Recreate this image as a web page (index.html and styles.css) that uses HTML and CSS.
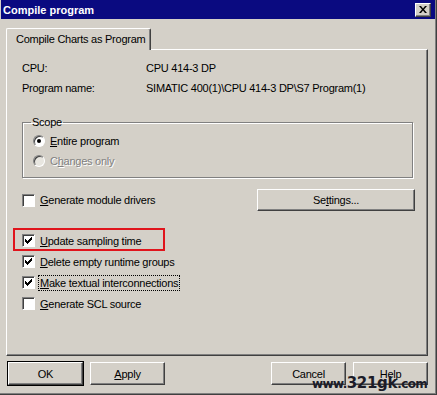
FILE: index.html
```html
<!DOCTYPE html>
<html lang="en">
<head>
    <meta charset="UTF-8">
    <title>Compile program</title>
    <link rel="stylesheet" href="styles.css">
</head>
<body>
    <div class="window">
        <div class="titlebar">
            <span class="title">Compile program</span>
            <span class="close-btn">
                <svg width="8" height="7" viewBox="0 0 8 7">
                    <path d="M0 0h2l2 2.5 2-2.5h2l-3 3.5 3 3.5h-2l-2-2.5-2 2.5h-2l3-3.5z" fill="#000"/>
                </svg>
            </span>
        </div>

        <div class="dialog-body">
            <div class="tabs">
                <div class="tab active">Compile Charts as Program</div>
            </div>

            <div class="panel">
                <div class="info-row">
                    <span class="info-label">CPU:</span>
                    <span>CPU 414-3 DP</span>
                </div>
                <div class="info-row">
                    <span class="info-label">Program name:</span>
                    <span>SIMATIC 400(1)\CPU 414-3 DP\S7 Program(1)</span>
                </div>

                <!-- Scope group -->
                <fieldset class="group">
                    <legend>Scope</legend>
                    <div class="option-row">
                        <span class="radio checked"></span>
                        <span><u>E</u>ntire program</span>
                    </div>
                    <div class="option-row disabled">
                        <span class="radio"></span>
                        <span>C<u>h</u>anges only</span>
                    </div>
                </fieldset>

                <div class="driver-row">
                    <div class="option-row">
                        <span class="checkbox"></span>
                        <span><u>G</u>enerate module drivers</span>
                    </div>
                    <button class="btn settings-btn">Se<u>t</u>tings...</button>
                </div>

                <div class="check-list">
                    <div class="option-row highlighted">
                        <span class="checkbox checked"></span>
                        <span><u>U</u>pdate sampling time</span>
                    </div>
                    <div class="option-row">
                        <span class="checkbox checked"></span>
                        <span><u>D</u>elete empty runtime groups</span>
                    </div>
                    <div class="option-row">
                        <span class="checkbox checked"></span>
                        <span class="focused"><u>M</u>ake textual interconnections</span>
                    </div>
                    <div class="option-row">
                        <span class="checkbox"></span>
                        <span><u>G</u>enerate SCL source</span>
                    </div>
                </div>
            </div>

            <div class="button-bar">
                <button class="btn default">OK</button>
                <button class="btn"><u>A</u>pply</button>
                <span class="spacer"></span>
                <button class="btn">Cancel</button>
                <button class="btn">Help</button>
            </div>
        </div>

        <div class="watermark">www.<span class="big">321gk</span>.com</div>
    </div>
</body>
</html>
```

FILE: styles.css
```css
body {
    margin: 0;
    font-family: "Liberation Sans", Arial, sans-serif;
    font-size: 11px;
    letter-spacing: -0.25px;
    color: #000;
    background-color: #d4d0c8;
}
.window {
    position: relative;
    width: 437px;
    height: 395px;
    box-sizing: border-box;
    background-color: #d4d0c8;
    border-right: 1px solid #404040;
    border-bottom: 1px solid #404040;
    box-shadow: inset -1px -1px 0 #808080;
    overflow: hidden;
}
.titlebar {
    height: 19px;
    margin: 0 1px 0 1px;
    background-color: #0a0a80;
    display: flex;
    align-items: center;
    justify-content: space-between;
    padding: 0 4px 0 2px;
}
.title {
    color: #fff;
    font-weight: bold;
    font-size: 11px;
    letter-spacing: 0;
}
.close-btn {
    width: 16px;
    height: 14px;
    box-sizing: border-box;
    background-color: #d4d0c8;
    border-top: 1px solid #fff;
    border-left: 1px solid #fff;
    border-right: 1px solid #404040;
    border-bottom: 1px solid #404040;
    box-shadow: inset -1px -1px 0 #808080;
    display: flex;
    align-items: center;
    justify-content: center;
}
.dialog-body {
    padding: 9px 8px 0 6px;
}
.tabs {
    display: flex;
    position: relative;
    z-index: 1;
}
.tab {
    height: 21px;
    line-height: 20px;
    padding: 0 5px 0 9px;
    white-space: nowrap;
    border-top: 1px solid #fff;
    border-left: 1px solid #fff;
    border-right: 1px solid #404040;
    box-shadow: inset -1px 0 0 #808080;
    border-radius: 2px 2px 0 0;
    background-color: #d4d0c8;
    margin-bottom: -1px;
}
.panel {
    height: 307px;
    box-sizing: border-box;
    padding: 8px 14px 0 15px;
    border-top: 1px solid #fff;
    border-left: 1px solid #fff;
    border-right: 1px solid #404040;
    border-bottom: 1px solid #404040;
    box-shadow: inset -1px -1px 0 #808080;
}
.info-row {
    display: flex;
    height: 20px;
    align-items: center;
}
.info-label {
    width: 124px;
}
.group {
    margin: 18px 0 0 0;
    padding: 0 0 0 9px;
    height: 62px;
    box-sizing: border-box;
    border: 1px solid #808080;
    box-shadow: 1px 1px 0 #fff, inset 1px 1px 0 #fff;
}
.group legend {
    padding: 0 1px;
    margin-left: -1px;
    line-height: 13px;
}
.group .option-row {
    height: 20px;
}
.group .option-row:first-of-type {
    margin-top: 2px;
}
.option-row {
    display: flex;
    align-items: center;
    gap: 5px;
    position: relative;
}
.option-row.disabled {
    color: #808080;
    text-shadow: 1px 1px 0 #fff;
}
.radio {
    width: 12px;
    height: 12px;
    box-sizing: border-box;
    border-radius: 50%;
    background-color: #fff;
    border: 1px solid;
    border-color: #808080 #fff #fff #808080;
    box-shadow: inset 1px 1px 0 #404040;
    display: flex;
    align-items: center;
    justify-content: center;
    margin-left: 1px;
}
.radio.checked::after {
    content: "";
    width: 4px;
    height: 4px;
    border-radius: 50%;
    background-color: #000;
}
.disabled .radio {
    background-color: #e8e6e0;
}
.checkbox {
    width: 13px;
    height: 13px;
    box-sizing: border-box;
    background-color: #fff;
    border: 1px solid;
    border-color: #808080 #fff #fff #808080;
    box-shadow: inset 1px 1px 0 #404040;
    position: relative;
}
.checkbox.checked::after {
    content: "";
    position: absolute;
    left: 2px;
    top: 2px;
    width: 8px;
    height: 7px;
    background: url("data:image/svg+xml;utf8,<svg xmlns='http://www.w3.org/2000/svg' width='8' height='7'><path d='M0 2h1v1h1v1h1v-1h1v-1h1v-1h1v-1h1v3h-1v1h-1v1h-1v1h-1v1h-1v-1h-1v-1h-1v-1h-1z' fill='black'/></svg>") no-repeat;
}
.driver-row {
    display: flex;
    align-items: center;
    justify-content: space-between;
    height: 22px;
    margin-top: 11px;
}
.btn {
    font-family: "Liberation Sans", Arial, sans-serif;
    font-size: 11px;
    letter-spacing: -0.25px;
    color: #000;
    background-color: #d4d0c8;
    border-top: 1px solid #fff;
    border-left: 1px solid #fff;
    border-right: 1px solid #404040;
    border-bottom: 1px solid #404040;
    box-shadow: inset -1px -1px 0 #808080;
    padding: 0;
    margin: 0;
    width: 75px;
    height: 23px;
}
.settings-btn {
    width: 158px;
    height: 22px;
    margin-right: -2px;
}
.btn.default {
    box-shadow: inset -1px -1px 0 #808080, 0 0 0 1px #000;
}
.check-list {
    margin-top: 19px;
}
.check-list .option-row {
    height: 21px;
}
.highlighted::before {
    content: "";
    position: absolute;
    left: -9px;
    top: -2px;
    width: 148px;
    height: 19px;
    border: 2px solid #e0141c;
}
.focused {
    outline: 1px dotted #000;
    padding: 1px 1px 1px 1px;
    margin-left: -1px;
}
.button-bar {
    display: flex;
    margin-top: 6px;
    gap: 7px;
    padding-left: 2px;
}
.spacer {
    flex: 1;
}
.watermark {
    position: absolute;
    left: 312px;
    top: 375px;
    font-family: "DejaVu Sans", Verdana, sans-serif;
    font-weight: bold;
    font-size: 12px;
    line-height: 16px;
    color: #1c1c28;
    letter-spacing: -0.6px;
}
.watermark .big {
    font-size: 15px;
    letter-spacing: -0.3px;
}
```
